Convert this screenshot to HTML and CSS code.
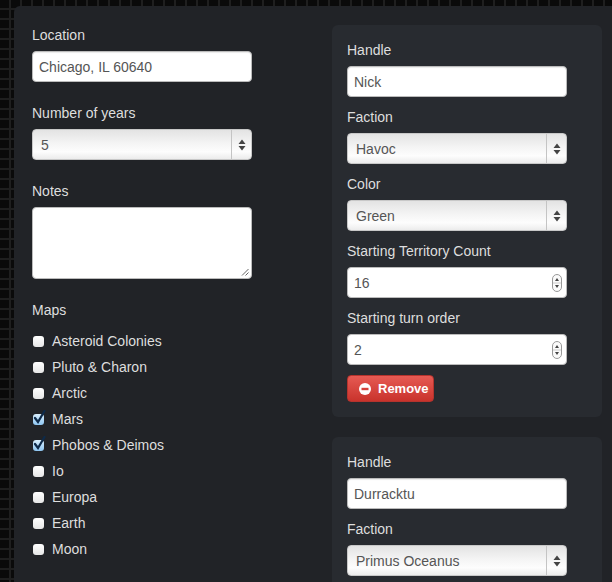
FILE: index.html
```html
<!DOCTYPE html>
<html>
<head>
<meta charset="utf-8">
<link rel="stylesheet" href="styles.css">
</head>
<body>
<div class="page">
  <div class="panel">
    <div class="col-left">
      <div class="group">
        <label class="lbl">Location</label>
        <input class="field" type="text" value="Chicago, IL 60640">
      </div>
      <div class="group">
        <label class="lbl">Number of years</label>
        <div class="select"><span class="sel-text">5</span><span class="sel-btn"><svg width="8" height="12" viewBox="0 0 8 12"><path d="M4 0.5 L7.5 5 L0.5 5 Z M4 11.5 L7.5 7 L0.5 7 Z" fill="#444"/></svg></span></div>
      </div>
      <div class="group">
        <label class="lbl">Notes</label>
        <div class="textarea"><svg class="grip" width="9" height="9" viewBox="0 0 9 9"><path d="M8.5 2 L2 8.5 M8.5 5.5 L5.5 8.5" stroke="#666" stroke-width="1"/></svg></div>
      </div>
      <div class="group">
        <label class="lbl">Maps</label>
        <div class="checks">
          <div class="chk-row"><span class="box"></span>Asteroid Colonies</div>
          <div class="chk-row"><span class="box"></span>Pluto &amp; Charon</div>
          <div class="chk-row"><span class="box"></span>Arctic</div>
          <div class="chk-row"><span class="box on"><svg class="tick" width="13" height="15" viewBox="0 0 13 15"><path d="M2 8 L5 12 L11.5 1" stroke="#0d2a4a" stroke-width="2.2" fill="none" stroke-linecap="round"/></svg></span>Mars</div>
          <div class="chk-row"><span class="box on"><svg class="tick" width="13" height="15" viewBox="0 0 13 15"><path d="M2 8 L5 12 L11.5 1" stroke="#0d2a4a" stroke-width="2.2" fill="none" stroke-linecap="round"/></svg></span>Phobos &amp; Deimos</div>
          <div class="chk-row"><span class="box"></span>Io</div>
          <div class="chk-row"><span class="box"></span>Europa</div>
          <div class="chk-row"><span class="box"></span>Earth</div>
          <div class="chk-row"><span class="box"></span>Moon</div>
        </div>
      </div>
    </div>
    <div class="col-right">
      <div class="card">
        <label class="lbl">Handle</label>
        <input class="field" type="text" value="Nick">
        <label class="lbl">Faction</label>
        <div class="select"><span class="sel-text">Havoc</span><span class="sel-btn"><svg width="8" height="12" viewBox="0 0 8 12"><path d="M4 0.5 L7.5 5 L0.5 5 Z M4 11.5 L7.5 7 L0.5 7 Z" fill="#444"/></svg></span></div>
        <label class="lbl">Color</label>
        <div class="select"><span class="sel-text">Green</span><span class="sel-btn"><svg width="8" height="12" viewBox="0 0 8 12"><path d="M4 0.5 L7.5 5 L0.5 5 Z M4 11.5 L7.5 7 L0.5 7 Z" fill="#444"/></svg></span></div>
        <label class="lbl">Starting Territory Count</label>
        <div class="number"><span class="num-text">16</span><svg class="spin" width="10" height="18" viewBox="0 0 10 18"><rect x="0.5" y="0.5" width="9" height="17" rx="4.5" fill="#fafafa" stroke="#999"/><line x1="1" y1="9" x2="9" y2="9" stroke="#ccc"/><path d="M5 4 L7 7 L3 7 Z M5 14 L7 11 L3 11 Z" fill="#444"/></svg></div>
        <label class="lbl">Starting turn order</label>
        <div class="number"><span class="num-text">2</span><svg class="spin" width="10" height="18" viewBox="0 0 10 18"><rect x="0.5" y="0.5" width="9" height="17" rx="4.5" fill="#fafafa" stroke="#999"/><line x1="1" y1="9" x2="9" y2="9" stroke="#ccc"/><path d="M5 4 L7 7 L3 7 Z M5 14 L7 11 L3 11 Z" fill="#444"/></svg></div>
        <button class="btn-remove"><svg width="12" height="12" viewBox="0 0 12 12"><circle cx="6" cy="6" r="6" fill="#fff"/><rect x="2.5" y="4.8" width="7" height="2.4" fill="#d4413b"/></svg>Remove</button>
      </div>
      <div class="card">
        <label class="lbl">Handle</label>
        <input class="field" type="text" value="Durracktu">
        <label class="lbl">Faction</label>
        <div class="select"><span class="sel-text">Primus Oceanus</span><span class="sel-btn"><svg width="8" height="12" viewBox="0 0 8 12"><path d="M4 0.5 L7.5 5 L0.5 5 Z M4 11.5 L7.5 7 L0.5 7 Z" fill="#444"/></svg></span></div>
      </div>
    </div>
  </div>
</div>
</body>
</html>
```
FILE: styles.css
```css
html, body {
  margin: 0;
  padding: 0;
  height: 100%;
}
body {
  font-family: "Liberation Sans", Arial, sans-serif;
  font-size: 14px;
  background-color: #0a0a0a;
  background-image:
    linear-gradient(90deg, transparent 9px, #1f1f1f 9px),
    linear-gradient(transparent 8px, #1f1f1f 8px);
  background-size: 11px 10px;
  overflow: hidden;
}
.page {
  padding: 6px 0 0 14px;
  height: 100%;
  box-sizing: border-box;
}
.panel {
  background: #212327;
  border-radius: 6px 0 0 0;
  display: flex;
  padding: 19px 0 0 18px;
  height: 100%;
  box-sizing: border-box;
}
.col-left {
  width: 300px;
  flex: none;
}
.col-right {
  width: 270px;
  flex: none;
  display: flex;
  flex-direction: column;
  gap: 20px;
}
.group {
  margin-bottom: 21px;
}
.lbl {
  display: block;
  color: #dedede;
  font-size: 14px;
  line-height: 20px;
  margin-bottom: 6px;
}
.field {
  display: block;
  box-sizing: border-box;
  width: 220px;
  height: 31px;
  margin: 0;
  padding: 0 6px;
  border: 1px solid #bbb;
  border-radius: 4px;
  background: #fff;
  font-family: "Liberation Sans", Arial, sans-serif;
  font-size: 14px;
  color: #555;
  outline: none;
  box-shadow: inset 0 1px 1px rgba(0,0,0,0.08);
}
.select {
  position: relative;
  box-sizing: border-box;
  width: 220px;
  height: 31px;
  border-radius: 4px;
  border: 1px solid #c8c8c8;
  background: linear-gradient(#e3e3e3 0%, #f4f4f4 45%, #fdfdfd 75%, #ececec 100%);
  display: flex;
  align-items: center;
  color: #555;
}
.sel-text {
  flex: 1;
  padding-left: 8px;
}
.sel-btn {
  width: 19px;
  align-self: stretch;
  border-left: 1px solid #c4c4c4;
  display: flex;
  align-items: center;
  justify-content: center;
}
.textarea {
  position: relative;
  box-sizing: border-box;
  width: 220px;
  height: 72px;
  border: 1px solid #bbb;
  border-radius: 4px;
  background: #fff;
}
.grip {
  position: absolute;
  right: 2px;
  bottom: 2px;
}
.checks {
  margin-top: 8px;
}
.chk-row {
  height: 26px;
  display: flex;
  align-items: center;
  color: #dedede;
  padding-left: 1px;
}
.box {
  position: relative;
  width: 11px;
  height: 11px;
  border-radius: 3px;
  background: linear-gradient(#ffffff, #e6e6e6);
  margin-right: 8px;
  flex: none;
}
.box.on {
  background: linear-gradient(#d8eefc, #8ec6f2);
}
.tick {
  position: absolute;
  left: 0;
  top: -4px;
}
.card {
  background: #282b30;
  border-radius: 6px;
  padding: 15px;
}
.card .field,
.card .select,
.card .number {
  margin-bottom: 10px;
}
.number {
  position: relative;
  box-sizing: border-box;
  width: 220px;
  height: 31px;
  border: 1px solid #bbb;
  border-radius: 4px;
  background: #fff;
  display: flex;
  align-items: center;
  color: #555;
}
.num-text {
  flex: 1;
  padding-left: 6px;
}
.spin {
  margin-right: 4px;
}
.btn-remove {
  display: flex;
  align-items: center;
  gap: 7px;
  box-sizing: border-box;
  width: 87px;
  height: 27px;
  padding: 0 0 0 11px;
  margin: 0;
  border: 1px solid #b5332d;
  border-radius: 4px;
  background: linear-gradient(#e65a53, #c9332c);
  color: #fff;
  font-family: "Liberation Sans", Arial, sans-serif;
  font-weight: bold;
  font-size: 13px;
}
```
